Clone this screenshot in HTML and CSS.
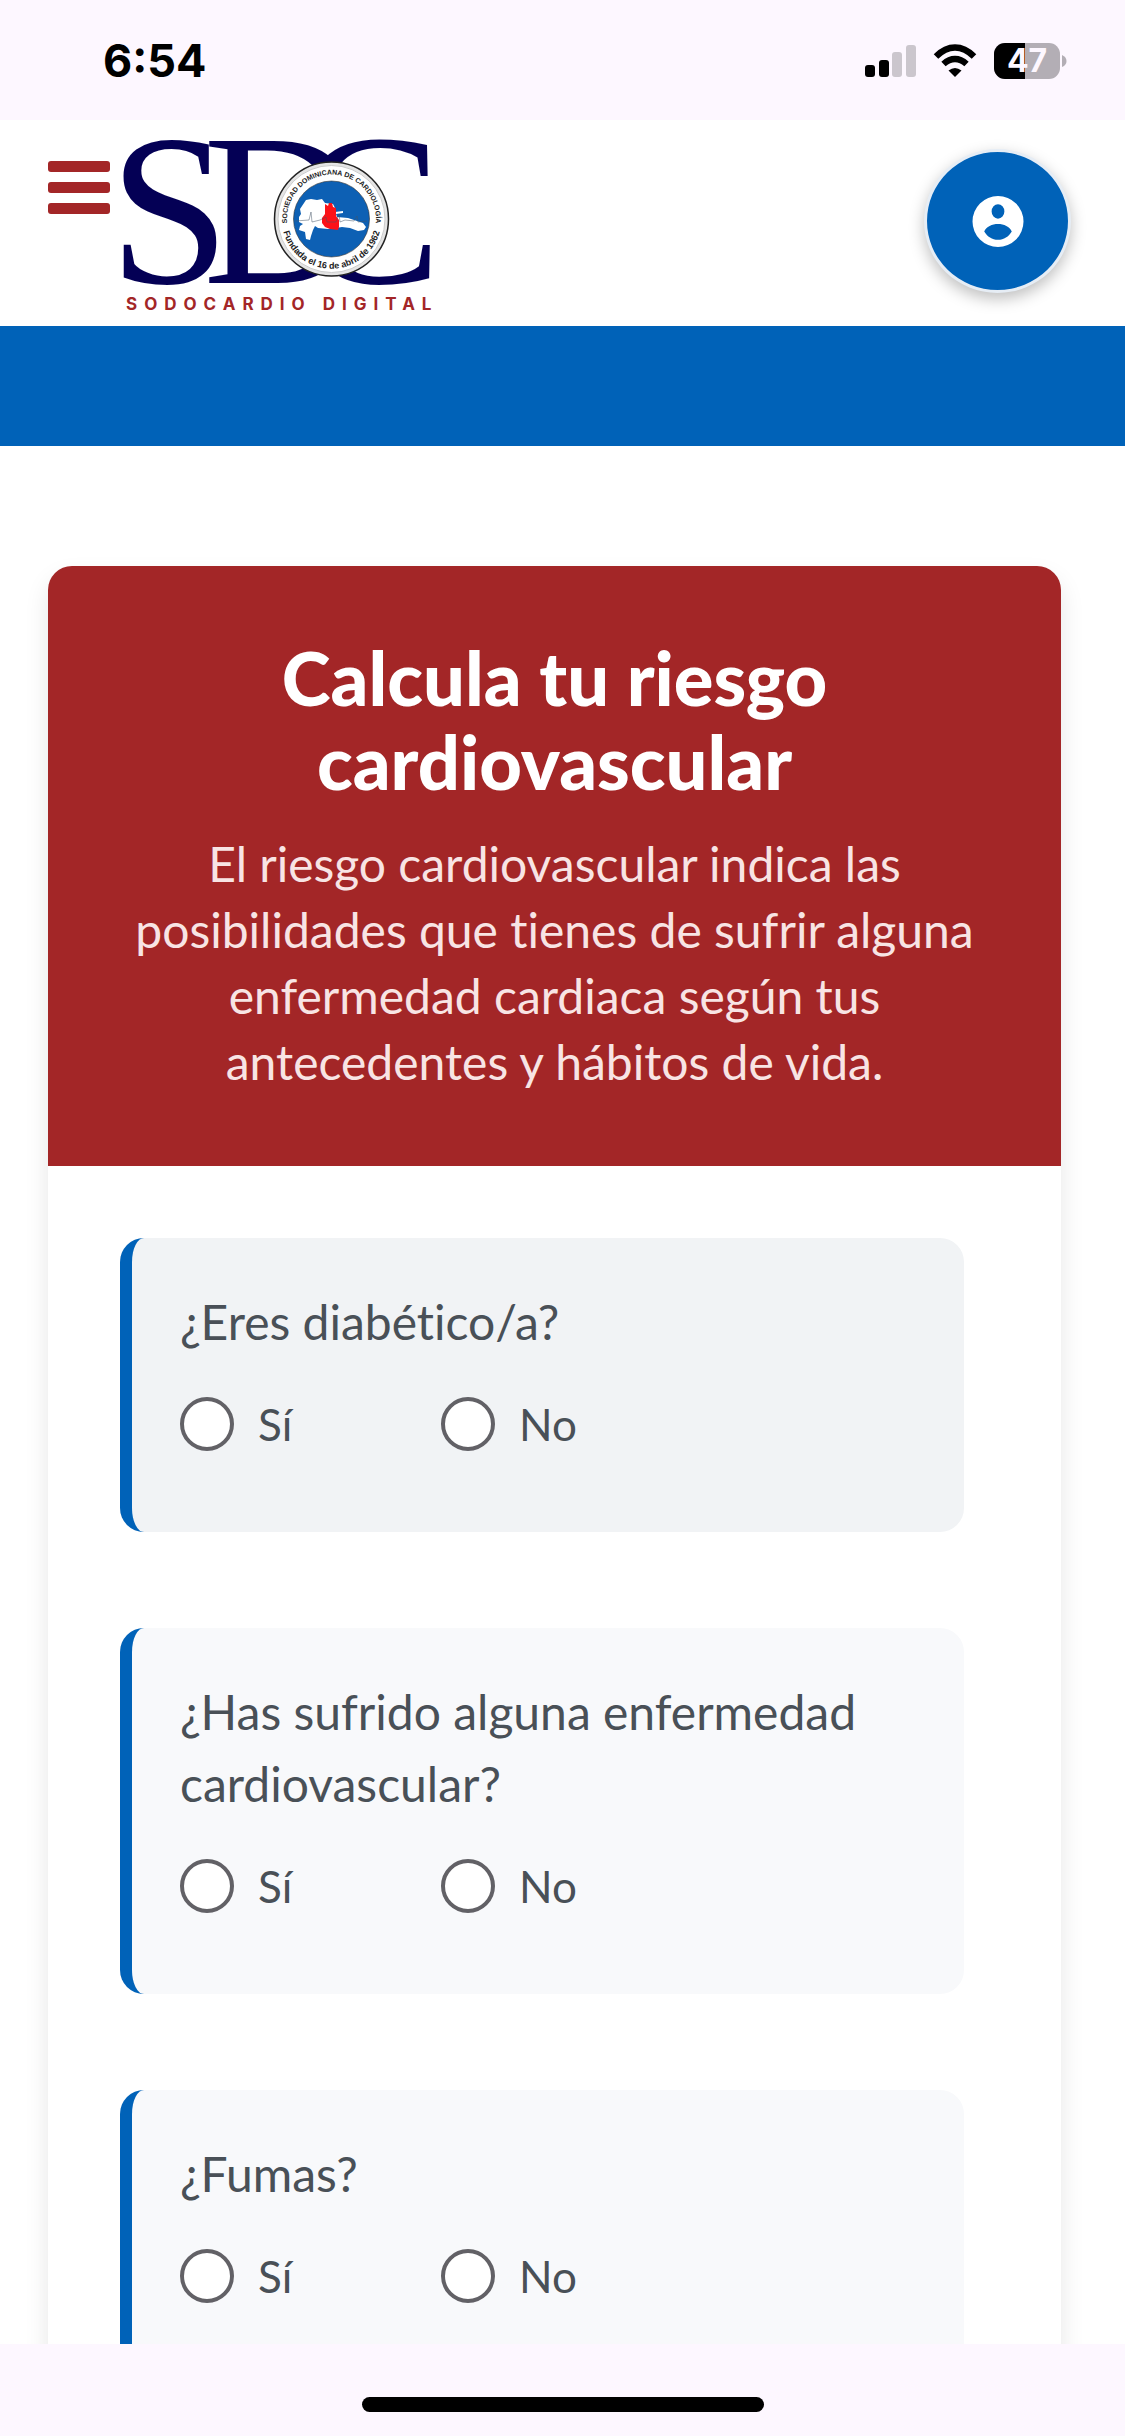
FILE: index.html
```html
<!DOCTYPE html>
<html lang="es">
<head>
  <meta charset="utf-8">
  <meta name="viewport" content="width=device-width, initial-scale=1">
  <title>Sodocardio Digital</title>
  <link rel="stylesheet" href="styles.css">
</head>
<body>
  <div class="status-bar">
    <time class="clock">6:54</time>
    <svg class="status-icons" viewBox="866 43 202 36" aria-hidden="true">
      <rect x="866" y="65" width="10" height="12" rx="3"/>
      <rect x="880" y="60" width="10" height="17" rx="3"/>
      <rect x="893" y="52" width="10" height="25" rx="3" fill="#cbc6cd"/>
      <rect x="907" y="45" width="10" height="32" rx="3" fill="#cbc6cd"/>
      <g fill="none" stroke="#000" stroke-width="6.4">
        <path d="M937 56.500Q946 47.500 956 47.500T975 56.500"/>
        <path d="M944.500 64Q950 59 956 59T967.500 64"/>
      </g>
      <path d="M949.500 70.500Q956 65.500 962.500 70.500L956 77Z"/>
      <rect x="995" y="43" width="66" height="36" rx="11" fill="#b3aeb5"/>
      <path d="M1006 43h20v36h-20a11 11 0 0 1-11-11V54a11 11 0 0 1 11-11z"/>
      <path d="M1063 55q4.500 2 4.500 6t-4.500 6z" fill="#b3aeb5"/>
      <text class="battery-level" x="1028" y="72">47</text>
    </svg>
  </div>

  <header class="site-header">
    <button class="menu-button" type="button" aria-label="Menú"><span></span><span></span><span></span></button>
    <a class="brand" href="#" aria-label="Sodocardio Digital">
      <svg class="logo" viewBox="118 130 324 190">
        <defs>
          <path id="seal-top" d="M288.600 231A44.500 44.500 0 1 1 374.400 231"/>
          <path id="seal-bottom" d="M282.200 227A50 50 0 0 0 380.800 227"/>
        </defs>
        <g class="logo-letters">
          <text x="109" y="283">S</text>
          <text x="203" y="283">D</text>
          <text x="297" y="283">C</text>
        </g>
        <circle cx="331.500" cy="219" r="57" fill="#e4e4e4" stroke="#222" stroke-width="1.500"/>
        <circle cx="331.500" cy="219" r="53.500" fill="#fff" stroke="#ccc"/>
        <circle cx="331.500" cy="219" r="38" fill="#0d60b4" stroke="#333" stroke-width=".6"/>
        <text class="seal-name"><textPath href="#seal-top" startOffset="50%">SOCIEDAD DOMINICANA DE CARDIOLOGÍA</textPath></text>
        <text class="seal-date"><textPath href="#seal-bottom" startOffset="50%">Fundada el 16 de abril de 1962</textPath></text>
        <path d="M306 200l5-1 6 1 5-1 3 4 8 1 2 4 0 4 8-1v2l-7 1 1 3 11 1 6 2 9 3 3 4-2 3-6 1-8-3-8-1-6 1-8 1-10-1-3-2-2 4-2 6-1 4-4-1-1-7-6-2 1-4 3-2-4-2 0-5 2-3-1-5z" fill="#fff"/>
        <path d="M325 204l3 2 1-3h3l1 4 3 1v8l3 4v7l-1 3-8-1-5-2-3-4 0-5 3-4z" fill="#fb1218"/>
        <path d="M295 221l14-1 2-8 1 10 8-2 6-3 1 5h9l3-8 1 8 5-2 9 1 3-5 1 6 9-1" fill="none" stroke="#456" stroke-width=".5"/>
        <text class="logo-caption" x="126" y="310">SODOCARDIO DIGITAL</text>
      </svg>
    </a>
    <button class="account-button" type="button" aria-label="Mi cuenta">
      <svg viewBox="2 2 20 20" width="52" height="51" aria-hidden="true"><path fill="#fff" fill-rule="evenodd" d="M12 2a10 10 0 1 0 0 20 10 10 0 0 0 0-20zm0 3.200a2.500 2.850 0 1 1 0 5.700 2.500 2.850 0 0 1 0-5.700zM6.600 15.900c.8-1.900 3.100-2.900 5.400-2.900s4.600 1 5.400 2.900c-1.200 2-3.100 3.300-5.400 3.300s-4.200-1.300-5.400-3.300z"/></svg>
    </button>
  </header>
  <div class="banner"></div>

  <main class="content">
    <form class="calculator">
      <header class="calculator-header">
        <h1>Calcula tu riesgo cardiovascular</h1>
        <p>El riesgo cardiovascular indica las posibilidades que tienes de sufrir alguna enfermedad cardiaca según tus antecedentes y hábitos de vida.</p>
      </header>
      <div class="questions">
        <fieldset class="question question-active">
          <legend>¿Eres diabético/a?</legend>
          <div class="options">
            <label><input type="radio" name="diabetes" value="si">Sí</label>
            <label><input type="radio" name="diabetes" value="no">No</label>
          </div>
        </fieldset>
        <fieldset class="question">
          <legend>¿Has sufrido alguna enfermedad cardiovascular?</legend>
          <div class="options">
            <label><input type="radio" name="enfermedad" value="si">Sí</label>
            <label><input type="radio" name="enfermedad" value="no">No</label>
          </div>
        </fieldset>
        <fieldset class="question">
          <legend>¿Fumas?</legend>
          <div class="options">
            <label><input type="radio" name="fumas" value="si">Sí</label>
            <label><input type="radio" name="fumas" value="no">No</label>
          </div>
        </fieldset>
      </div>
    </form>
  </main>

  <div class="home-bar"><span class="home-indicator"></span></div>
</body>
</html>
```
FILE: styles.css
```css
* {
  box-sizing: border-box;
}

body {
  margin: 0;
  height: 100vh;
  display: flex;
  flex-direction: column;
  background: #fff;
  font-family: Lato, "Open Sans", sans-serif;
  font-size: 48px;
  font-variant-ligatures: none;
  color: #495057;
}

/* System bars */
.status-bar {
  flex: none;
  height: 120px;
  padding: 2px 58px 0 103px;
  display: flex;
  align-items: center;
  justify-content: space-between;
  background: #fdf7ff;
}

.clock {
  font: 700 45px/60px Inter, sans-serif;
  color: #000;
}

.status-icons {
  width: 202px;
  height: 36px;
  overflow: visible;
}

.battery-level {
  font: 700 32px Inter, sans-serif;
  fill: #fdf7ff;
  text-anchor: middle;
}

.home-bar {
  flex: none;
  height: 92px;
  padding-top: 29px;
  display: flex;
  align-items: center;
  justify-content: center;
  background: #fdf7ff;
}

.home-indicator {
  width: 402px;
  height: 15px;
  border-radius: 8px;
  background: #000;
}

/* Site header */
.site-header {
  flex: none;
  height: 206px;
  padding: 10px 54px 6px 48px;
  display: flex;
  align-items: flex-start;
  background: #fff;
}

.menu-button {
  width: 62px;
  margin-top: 31px;
  padding: 0;
  border: 0;
  background: none;
  display: grid;
  gap: 10px;
}

.menu-button span {
  height: 11px;
  border-radius: 3px;
  background: #a32627;
}

.brand {
  margin-left: 8px;
}

.logo {
  display: block;
  width: 324px;
  height: 190px;
  overflow: visible;
}

.logo-letters {
  font: 217px "Liberation Serif", serif;
  fill: #040055;
}

.logo-caption {
  font: 700 17px Inter, sans-serif;
  letter-spacing: 7px;
  fill: #a32627;
}

.seal-name,
.seal-date {
  font: 700 7px "Liberation Sans", sans-serif;
  fill: #222;
  text-anchor: middle;
}

.seal-date {
  font-size: 9px;
}

.account-button {
  width: 147px;
  height: 144px;
  margin: 19px 0 0 auto;
  padding: 0;
  display: grid;
  place-items: center;
  border: 3px solid #e6edf5;
  border-radius: 50%;
  background: #0062b8;
  box-shadow: 0 6px 15px rgba(0, 0, 0, 0.25);
}

.banner {
  flex: none;
  height: 120px;
  background: #0062b8;
}

/* Risk calculator */
.content {
  flex: 1;
  min-height: 0;
  overflow: hidden auto;
  scrollbar-width: none;
  padding: 120px 64px 0 48px;
}

.calculator {
  border-radius: 24px;
  background: #fff;
  box-shadow: 0 12px 24px rgba(0, 0, 0, 0.1);
}

.calculator-header {
  padding: 70px 84px 71px;
  border-radius: 24px 24px 0 0;
  background: #a32627;
  text-align: center;
}

h1 {
  margin: 0 0 27px;
  font-size: 74px;
  font-weight: 900;
  line-height: 84px;
  color: #fff;
}

.calculator-header p {
  margin: 0;
  line-height: 66px;
  color: #f8e4e4;
}

.questions {
  padding: 72px 97px 96px 72px;
  display: grid;
  gap: 96px;
}

.question {
  min-width: 0;
  margin: 0;
  padding: 48px;
  border: 0 solid #0062b8;
  border-left-width: 12px;
  border-radius: 24px;
  background: #f8f9fb;
  line-height: 72px;
}

.question-active {
  background: #f1f3f5;
}

.question legend {
  float: left;
  width: 100%;
  padding: 0;
}

.options {
  clear: both;
  padding: 36px 0 30px;
  display: flex;
  gap: 24px;
  font-size: 44px;
  line-height: 60px;
}

.options label {
  min-width: 237px;
  display: flex;
  align-items: center;
  gap: 24px;
}

.options input {
  appearance: none;
  width: 54px;
  height: 54px;
  margin: 0;
  border: 4px solid #626166;
  border-radius: 50%;
  background: #fff;
}

.options input:checked {
  border-width: 16px;
  border-color: #0062b8;
}
```
